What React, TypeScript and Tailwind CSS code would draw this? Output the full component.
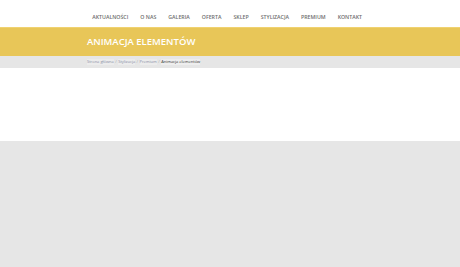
const navItems = ["Aktualności", "O nas", "Galeria", "Oferta", "Sklep", "Stylizacja", "Premium", "Kontakt"];

const crumbs = ["Strona główna", "Stylizacja", "Premium"];

export default function App() {
  return (
    <div className="w-[460px] h-[267px] flex flex-col bg-white font-['Open_Sans',sans-serif] overflow-hidden">
      {/* Top navigation */}
      <header className="h-[27px] flex items-center justify-end pr-[98px]">
        <nav className="flex items-center gap-[12px] text-[5.25px] font-semibold uppercase text-[#6e6e6e] pt-[8px]">
          {navItems.map((item) => (
            <span key={item}>{item}</span>
          ))}
        </nav>
      </header>

      {/* Title band */}
      <div className="h-[29px] bg-[#e8c658] border-t border-[#f0d270] flex items-center pl-[87px] pt-[1px]">
        <h1 className="text-[9.5px] font-semibold uppercase text-white">Animacja elementów</h1>
      </div>

      {/* Breadcrumbs */}
      <div className="h-[12px] bg-[#e6e6e6] flex items-center pl-[87px] text-[4px] text-[#8a8ea6]">
        {crumbs.map((c) => (
          <span key={c} className="flex items-center">
            <span className="bg-[#ececec]">{c}</span>
            <span className="mx-[1.5px] text-[#aaa]">/</span>
          </span>
        ))}
        <span className="text-[#333] bg-[#eeeeee]">Animacja elementów</span>
      </div>

      {/* Content */}
      <main className="h-[73px] bg-white" />

      {/* Footer area */}
      <footer className="flex-1 bg-[#e6e6e6]" />
    </div>
  );
}
